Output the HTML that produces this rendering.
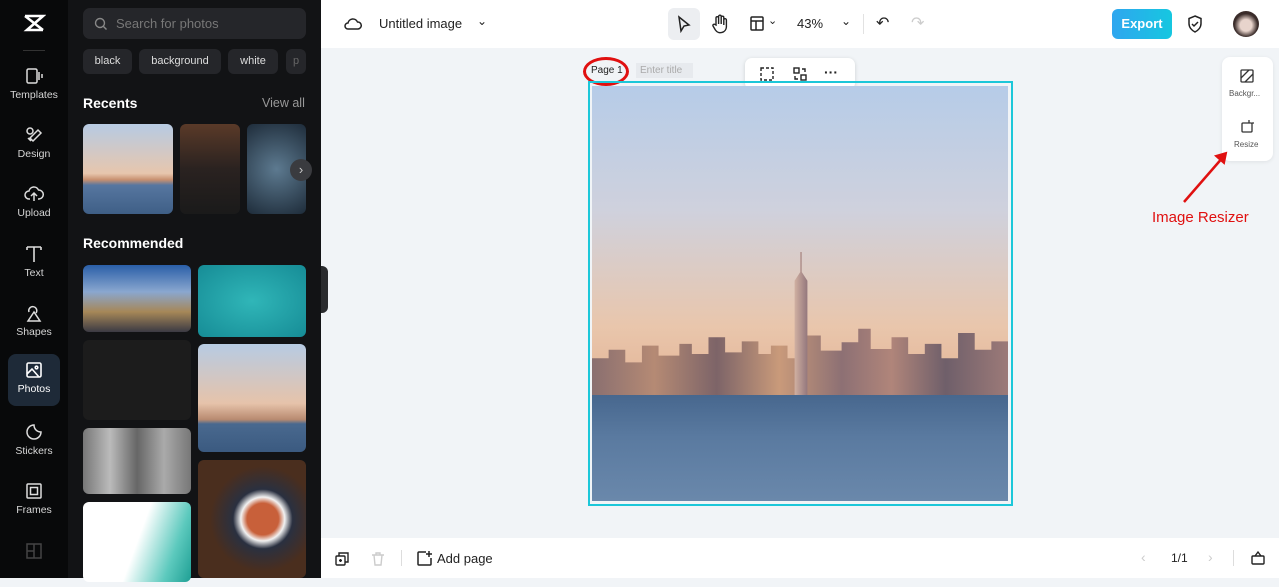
<!DOCTYPE html>
<html><head><meta charset="utf-8"><style>
*{box-sizing:border-box;margin:0;padding:0}
body{width:1279px;height:578px;overflow:hidden;font-family:"Liberation Sans",sans-serif;position:relative;background:#f1f4f7}
.abs{position:absolute}
.rail{left:0;top:0;width:68px;height:578px;background:#08090a}
.ri{position:absolute;left:8px;width:52px;height:52px;color:#d6d6d6;font-size:10.5px;text-align:center}
.ri svg{display:block;margin:6px auto 3px}
.panel{left:68px;top:0;width:253px;height:578px;background:#121315;color:#fff}
.chip{position:absolute;top:49px;height:25px;background:#25262a;border-radius:6px;font-size:11px;color:#ddd;line-height:25px;text-align:center}
.img{position:absolute;border-radius:6px;overflow:hidden}
.top{left:321px;top:0;width:958px;height:48px;background:#fff}
.bot{left:321px;top:538px;width:958px;height:40px;background:#fff}
</style></head><body>
<div class="abs rail">
 <svg class="abs" style="left:22px;top:13px" width="24" height="20" viewBox="0 0 24 20"><path d="M3 3h18L5 17h16M3 3l18 14" stroke="#fff" stroke-width="2.6" fill="none"/></svg>
 <div class="abs" style="left:23px;top:50px;width:22px;height:1px;background:#333"></div>
 <div class="ri" style="top:60px"><svg width="20" height="20" viewBox="0 0 20 20" fill="none" stroke="#ddd" stroke-width="1.5"><rect x="3" y="3" width="10" height="14" rx="1.5"/><path d="M15 6v8M18 8v4"/></svg>Templates</div>
 <div class="ri" style="top:119px"><svg width="20" height="20" viewBox="0 0 20 20" fill="none" stroke="#ddd" stroke-width="1.5"><circle cx="6" cy="6" r="3"/><path d="M9 16l8-8-3-3-8 8zM4 13l3 3"/></svg>Design</div>
 <div class="ri" style="top:178px"><svg width="20" height="20" viewBox="0 0 20 20" fill="none" stroke="#ddd" stroke-width="1.5"><path d="M6 15H5a4 4 0 010-8 5 5 0 019.5-1A4 4 0 0115 15h-1M10 17V9M7 12l3-3 3 3"/></svg>Upload</div>
 <div class="ri" style="top:238px"><svg width="20" height="20" viewBox="0 0 20 20" fill="none" stroke="#ddd" stroke-width="1.6"><path d="M3 3h14M10 3v15M3 3v3M17 3v3"/></svg>Text</div>
 <div class="ri" style="top:297px"><svg width="20" height="20" viewBox="0 0 20 20" fill="none" stroke="#ddd" stroke-width="1.5"><path d="M5 9a4 4 0 117 1M10 9l-6 9h12z"/></svg>Shapes</div>
 <div class="ri" style="top:354px;background:#1e2a38;border-radius:8px;color:#fff;height:52px"><svg width="20" height="20" viewBox="0 0 20 20" fill="none" stroke="#fff" stroke-width="1.6"><rect x="3" y="3" width="14" height="14" rx="1.5"/><circle cx="12.5" cy="7.5" r="1.3"/><path d="M3 14l5-5 7 8"/></svg>Photos</div>
 <div class="ri" style="top:416px"><svg width="20" height="20" viewBox="0 0 20 20" fill="none" stroke="#ddd" stroke-width="1.5"><path d="M17 10A7 7 0 1110 3c0 4 3 7 7 7z"/></svg>Stickers</div>
 <div class="ri" style="top:475px"><svg width="20" height="20" viewBox="0 0 20 20" fill="none" stroke="#ddd" stroke-width="1.5"><rect x="3" y="3" width="14" height="14" rx="1"/><rect x="6.5" y="6.5" width="7" height="7"/></svg>Frames</div>
 <div class="ri" style="top:535px"><svg width="20" height="20" viewBox="0 0 20 20" fill="none" stroke="#444" stroke-width="1.5"><rect x="3" y="3" width="14" height="14"/><path d="M10 3v14M3 10h7"/></svg></div>
</div>
<div class="abs panel">
 <div class="abs" style="left:15px;top:8px;width:223px;height:31px;background:#25262a;border-radius:7px;color:#777;font-size:13px;line-height:31px;padding-left:33px">Search for photos
  <svg class="abs" style="left:11px;top:9px" width="14" height="14" viewBox="0 0 14 14" fill="none" stroke="#888" stroke-width="1.4"><circle cx="6" cy="6" r="4.5"/><path d="M9.5 9.5l3 3"/></svg></div>
 <div class="chip" style="left:15px;width:49px">black</div>
 <div class="chip" style="left:71px;width:82px">background</div>
 <div class="chip" style="left:160px;width:50px">white</div>
 <div class="chip" style="left:218px;width:20px;color:#666">p</div>
 <div class="abs" style="left:15px;top:95px;font-size:14px;font-weight:bold">Recents</div>
 <div class="abs" style="left:194px;top:96px;font-size:12.5px;color:#999">View all</div>
 <div class="img" style="left:15px;top:124px;width:90px;height:90px;background:linear-gradient(#b7cbe3 0%,#e7c6ad 55%,#c89070 62%,#5676a0 68%,#3f5f86 100%)"></div>
 <div class="img" style="left:112px;top:124px;width:60px;height:90px;background:linear-gradient(#5a3a28,#2a2220 50%,#1a1a1a)"></div>
 <div class="img" style="left:179px;top:124px;width:59px;height:90px;background:radial-gradient(circle at 50% 50%,#5d7a90,#1e2c3a)"></div>
 <div class="abs" style="left:222px;top:159px;width:22px;height:22px;border-radius:50%;background:#3a3b3f;color:#ccc;font-size:13px;text-align:center;line-height:21px">›</div>
 <div class="abs" style="left:15px;top:235px;font-size:14px;font-weight:bold">Recommended</div>
 <div class="img" style="left:15px;top:265px;width:108px;height:67px;background:linear-gradient(#2a5fa8,#8aa7cf 40%,#a68758 70%,#3b3a44)"></div>
 <div class="img" style="left:130px;top:265px;width:108px;height:72px;background:radial-gradient(#30b6b8,#168c96)"></div>
 <div class="img" style="left:15px;top:340px;width:108px;height:80px;background:#1c1c1c"></div>
 <div class="img" style="left:130px;top:344px;width:108px;height:108px;background:linear-gradient(#b7cbe3 0%,#e6c3aa 55%,#b88a70 70%,#49698f 74%,#3b5a80 100%)"></div>
 <div class="img" style="left:15px;top:428px;width:108px;height:66px;background:linear-gradient(90deg,#777,#bbb,#666,#aaa,#777)"></div>
 <div class="img" style="left:130px;top:460px;width:108px;height:118px;background:radial-gradient(circle at 60% 50%,#c8603a 18%,#f2f2f2 25%,#2a3040 34%,#4a2e1e 60%)"></div>
 <div class="img" style="left:15px;top:502px;width:108px;height:80px;background:linear-gradient(110deg,#fff 50%,#5cc9bd 80%,#1e9f94)"></div>
</div>
<div class="abs" style="left:321px;top:266px;width:7px;height:47px;background:#2a2b2e;border-radius:0 6px 6px 0"></div>
<div class="abs top">
 <svg class="abs" style="left:23px;top:15px" width="18" height="18" viewBox="0 0 18 18" fill="none" stroke="#222" stroke-width="1.5"><path d="M5 14H4a3 3 0 010-6 5 5 0 019.5-1A3.5 3.5 0 0114 14z"/></svg>
 <div class="abs" style="left:58px;top:16px;font-size:13px;color:#222">Untitled image</div>
 <div class="abs" style="left:156px;top:14px;font-size:12px;color:#222">⌄</div>
 <div class="abs" style="left:347px;top:8px;width:32px;height:32px;background:#eceef1;border-radius:6px"></div>
 <svg class="abs" style="left:355px;top:15px" width="16" height="18" viewBox="0 0 16 18" fill="none" stroke="#222" stroke-width="1.5"><path d="M3 2l10 8-5 1-3 5z"/></svg>
 <svg class="abs" style="left:390px;top:14px" width="18" height="20" viewBox="0 0 18 20" fill="none" stroke="#222" stroke-width="1.4"><path d="M5 11V4a1.3 1.3 0 012.6 0v6V2.5a1.3 1.3 0 012.6 0V10V3.5a1.3 1.3 0 012.6 0V11 6a1.3 1.3 0 012.6 0v7a6 6 0 01-11 3L2 12a1.3 1.3 0 012-1.5z"/></svg>
 <svg class="abs" style="left:428px;top:15px" width="16" height="17" viewBox="0 0 16 17" fill="none" stroke="#222" stroke-width="1.5"><rect x="2" y="2" width="12" height="13" rx="1"/><path d="M2 6h12M7 6v9"/></svg>
 <div class="abs" style="left:447px;top:14px;font-size:11px;color:#222">⌄</div>
 <div class="abs" style="left:476px;top:16px;font-size:13px;color:#222">43%</div>
 <div class="abs" style="left:520px;top:14px;font-size:12px;color:#222">⌄</div>
 <div class="abs" style="left:542px;top:14px;width:1px;height:20px;background:#e2e2e2"></div>
 <div class="abs" style="left:555px;top:13px;font-size:16px;color:#222">↶</div>
 <div class="abs" style="left:590px;top:13px;font-size:16px;color:#ccc">↷</div>
 <div class="abs" style="left:791px;top:9px;width:60px;height:30px;border-radius:6px;background:linear-gradient(90deg,#2fa6ef,#16c7e0);color:#fff;font-size:13px;font-weight:bold;text-align:center;line-height:30px">Export</div>
 <svg class="abs" style="left:865px;top:14px" width="18" height="20" viewBox="0 0 18 20" fill="none" stroke="#222" stroke-width="1.5"><path d="M9 2l6 2.5v5c0 4-3 7-6 8.5-3-1.5-6-4.5-6-8.5v-5zM6 10l2 2 4-4"/></svg>
 <div class="abs" style="left:912px;top:11px;width:26px;height:26px;border-radius:50%;background:radial-gradient(circle at 50% 55%,#e8d4cc 30%,#3a2c2a 60%)"></div>
</div>
<!-- canvas -->
<div class="abs" style="left:591px;top:65px;font-size:10px;color:#222">Page 1</div>
<div class="abs" style="left:583px;top:57px;width:46px;height:29px;border:3px solid #e01010;border-radius:50%"></div>
<div class="abs" style="left:636px;top:63px;width:57px;height:15px;background:#e7eaee;font-size:10px;color:#aaa;padding-left:4px;line-height:15px">Enter title</div>
<div class="abs" style="left:745px;top:58px;width:110px;height:32px;background:#fff;border-radius:7px;box-shadow:0 1px 4px rgba(0,0,0,.15)"></div>
<svg class="abs" style="left:759px;top:66px" width="16" height="16" viewBox="0 0 16 16" fill="none" stroke="#222" stroke-width="1.4" stroke-dasharray="3 2"><rect x="2" y="2" width="12" height="12"/></svg>
<svg class="abs" style="left:792px;top:66px" width="16" height="16" viewBox="0 0 16 16" fill="none" stroke="#222" stroke-width="1.4"><rect x="2" y="2" width="5" height="5"/><rect x="9" y="9" width="5" height="5"/><path d="M10 3h3v3M6 13H3v-3"/></svg>
<div class="abs" style="left:824px;top:64px;font-size:14px;font-weight:bold;color:#222">···</div>
<div class="abs" style="left:588px;top:81px;width:425px;height:425px;border:2px solid #1cc7d9"></div>
<div class="abs" style="left:592px;top:86px;width:416px;height:415px;overflow:hidden;background:linear-gradient(#b6cce8 0%,#cfd1dd 30%,#e9c6ac 58%,#e4b698 72%)">
 <div class="abs" style="left:0;top:226px;width:416px;height:84px;background:linear-gradient(90deg,#8a6f70,#b58a74 15%,#7d6468 30%,#c99a7a 45%,#8d7074 60%,#b0857a 72%,#6f5f6a 85%,#9c7a78 100%);clip-path:polygon(0 55%,4% 55%,4% 45%,8% 45%,8% 60%,12% 60%,12% 40%,16% 40%,16% 52%,21% 52%,21% 38%,24% 38%,24% 50%,28% 50%,28% 30%,32% 30%,32% 48%,36% 48%,36% 35%,40% 35%,40% 50%,43% 50%,43% 40%,47% 40%,47% 55%,51% 55%,51% 28%,55% 28%,55% 46%,60% 46%,60% 36%,64% 36%,64% 20%,67% 20%,67% 44%,72% 44%,72% 30%,76% 30%,76% 50%,80% 50%,80% 38%,84% 38%,84% 55%,88% 55%,88% 25%,92% 25%,92% 45%,96% 45%,96% 35%,100% 35%,100% 100%,0 100%)"></div>
 <div class="abs" style="left:201px;top:166px;width:16px;height:144px;background:linear-gradient(90deg,#d8b7a6,#8c7078);clip-path:polygon(45% 0,55% 0,55% 14%,90% 20%,90% 100%,10% 100%,10% 20%,45% 14%)"></div>
 <div class="abs" style="left:0;top:309px;width:416px;height:106px;background:linear-gradient(#47678e,#5a7aa0 40%,#6a88ab 100%)"></div>
</div>
<div class="abs" style="left:1222px;top:57px;width:51px;height:104px;background:#fff;border-radius:8px;box-shadow:0 1px 4px rgba(0,0,0,.08)"></div>
<svg class="abs" style="left:1239px;top:68px" width="16" height="16" viewBox="0 0 16 16" fill="none" stroke="#333" stroke-width="1.3"><rect x="2" y="2" width="12" height="12" rx="1"/><path d="M2 10l8-8M6 14l8-8"/></svg>
<div class="abs" style="left:1229px;top:89px;font-size:8px;color:#555">Backgr...</div>
<svg class="abs" style="left:1239px;top:119px" width="16" height="16" viewBox="0 0 16 16" fill="none" stroke="#333" stroke-width="1.3"><rect x="3" y="4" width="10" height="9" rx="1"/><path d="M10 1v3M13 4h2"/></svg>
<div class="abs" style="left:1234px;top:140px;font-size:8px;color:#555">Resize</div>
<svg class="abs" style="left:1180px;top:150px" width="52" height="56" viewBox="0 0 52 56"><path d="M4 52L44 6" stroke="#e01010" stroke-width="2.5"/><path d="M36 6l10-3-2 10z" fill="#e01010" stroke="#e01010" stroke-width="2"/></svg>
<div class="abs" style="left:1152px;top:209px;font-size:15px;color:#e01010">Image Resizer</div>
<div class="abs bot">
 <svg class="abs" style="left:13px;top:13px" width="16" height="16" viewBox="0 0 16 16" fill="none" stroke="#222" stroke-width="1.4"><rect x="2" y="5" width="9" height="9" rx="1"/><path d="M5 5V2h9v9h-3M6.5 8v3M5 9.5h3"/></svg>
 <svg class="abs" style="left:49px;top:13px" width="16" height="16" viewBox="0 0 16 16" fill="none" stroke="#ccc" stroke-width="1.4"><path d="M2 4h12M6 4V2h4v2M4 4l1 10h6l1-10"/></svg>
 <div class="abs" style="left:80px;top:12px;width:1px;height:16px;background:#ddd"></div>
 <svg class="abs" style="left:95px;top:12px" width="17" height="17" viewBox="0 0 17 17" fill="none" stroke="#222" stroke-width="1.5"><path d="M10 2H3a1 1 0 00-1 1v11a1 1 0 001 1h11a1 1 0 001-1V8M13 1v6M10 4h6"/></svg>
 <div class="abs" style="left:116px;top:13px;font-size:13px;color:#222">Add page</div>
 <div class="abs" style="left:820px;top:11px;font-size:14px;color:#ccc">‹</div>
 <div class="abs" style="left:850px;top:13px;font-size:12px;color:#222">1/1</div>
 <div class="abs" style="left:887px;top:11px;font-size:14px;color:#ccc">›</div>
 <div class="abs" style="left:912px;top:12px;width:1px;height:16px;background:#ddd"></div>
 <svg class="abs" style="left:929px;top:12px" width="16" height="16" viewBox="0 0 16 16" fill="none" stroke="#222" stroke-width="1.4"><rect x="2" y="6" width="12" height="8" rx="1"/><path d="M5 6l3-4 3 4"/></svg>
</div>
</body></html>
